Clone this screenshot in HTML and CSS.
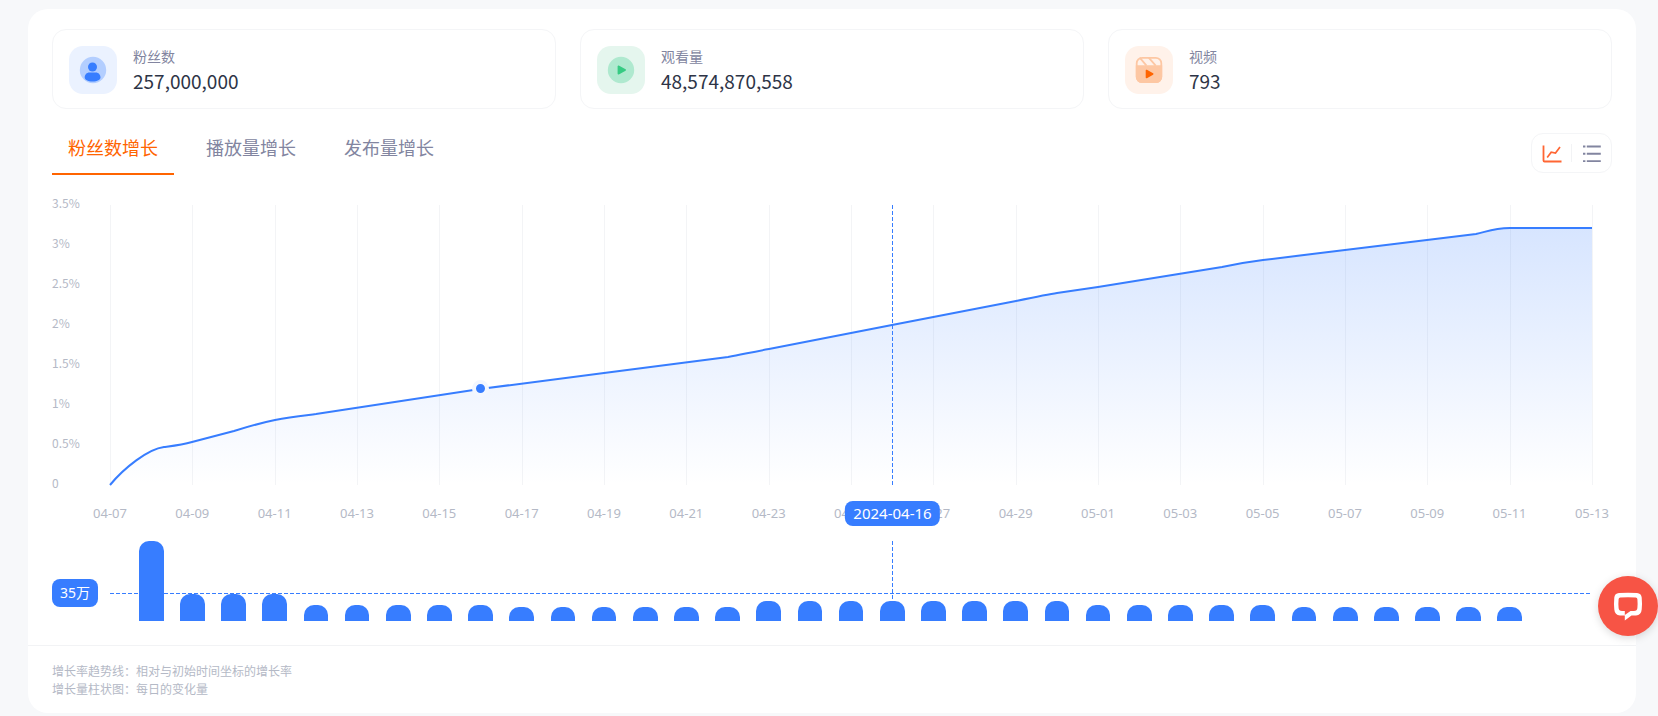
FILE: index.html
```
<!DOCTYPE html>
<html lang="zh-CN">
<head>
<meta charset="utf-8">
<meta name="viewport" content="width=device-width, initial-scale=1">
<title>粉丝数增长</title>
<link rel="stylesheet" href="styles.css">
</head>
<body>
<main class="panel">
  <section class="stats">
    <article class="stat">
      <span class="stat-icon blue">
        <svg width="28" height="28" viewBox="0 0 28 28"><circle cx="14" cy="14" r="13.2" fill="#b3ceff"/><circle cx="13.500" cy="11" r="4.500" fill="#377dff"/><path d="M5.700 21.500c0-2.800 2-5 4.600-5h6.600c2.600 0 4.600 2.200 4.600 5 0 2-3 4-7.900 4s-7.900-2-7.900-4z" fill="#377dff"/></svg>
      </span>
      <div><h2 class="stat-label">粉丝数</h2><p class="stat-value">257,000,000</p></div>
    </article>
    <article class="stat">
      <span class="stat-icon green">
        <svg width="28" height="28" viewBox="0 0 28 28"><circle cx="14" cy="14" r="13.2" fill="#afe9cf"/><path d="M11.400 10.300v7.400l6.800-3.700z" fill="#36cb83" stroke="#36cb83" stroke-width="1.600" stroke-linejoin="round"/></svg>
      </span>
      <div><h2 class="stat-label">观看量</h2><p class="stat-value">48,574,870,558</p></div>
    </article>
    <article class="stat">
      <span class="stat-icon orange">
        <svg width="28" height="28" viewBox="0 0 28 28"><path d="M.8 9.300h26.400V21a6 6 0 0 1-6 6H6.800a6 6 0 0 1-6-6z" fill="#fdc7a3"/><rect x="1.700" y="1.800" width="24.600" height="24.400" rx="5.500" fill="none" stroke="#fdc7a3" stroke-width="1.800"/><path d="M4.700 1.700l6.800 8M13.700 1.700l7 8" stroke="#fdc7a3" stroke-width="1.800"/><path d="M11.500 14.500v7l6.200-3.500z" fill="#ff6400" stroke="#ff6400" stroke-width="1.600" stroke-linejoin="round"/></svg>
      </span>
      <div><h2 class="stat-label">视频</h2><p class="stat-value">793</p></div>
    </article>
  </section>

  <div class="toolbar">
    <nav class="tabs">
      <button class="tab active" type="button">粉丝数增长</button>
      <button class="tab" type="button">播放量增长</button>
      <button class="tab" type="button">发布量增长</button>
    </nav>
    <div class="views">
      <button class="view" type="button" aria-label="图表">
        <svg width="20" height="20" viewBox="0 0 20 20" fill="none" stroke="#ff6633"><path d="M1.500 1.500V16.500q0 1 1 1H19.500" stroke-width="1.800"/><path d="M5.200 13.500l4-5.300 4.300.8L18 3" stroke-width="1.700"/></svg>
      </button>
      <button class="view" type="button" aria-label="列表">
        <svg width="20" height="20" viewBox="0 0 20 20" stroke="#8285a0" stroke-width="1.900"><path d="M1 2.500h2.400M4.800 2.500h14M1 9.800h2.400M4.800 9.800h14M1 17.100h2.400M4.800 17.100h14"/></svg>
      </button>
    </div>
  </div>

  <section class="chart">
    <ul class="y-axis"><li>3.5%</li><li>3%</li><li>2.5%</li><li>2%</li><li>1.5%</li><li>1%</li><li>0.5%</li><li>0</li></ul>
    <div class="plot">
      <div class="grid"><i></i><i></i><i></i><i></i><i></i><i></i><i></i><i></i><i></i><i></i><i></i><i></i><i></i><i></i><i></i><i></i><i></i><i></i></div>
      <svg class="curve" viewBox="0 0 1482 280" preserveAspectRatio="none">
        <defs><linearGradient id="fade" gradientUnits="userSpaceOnUse" x1="0" y1="23" x2="0" y2="280"><stop offset="0" stop-color="#377dff" stop-opacity=".2"/><stop offset="1" stop-color="#377dff" stop-opacity="0"/></linearGradient></defs>
        <path fill="url(#fade)" d="M0 280C14 263 38 244 54 242C62 241 72 240 82 237L124 226C140 221 150 218 165 215C180 212 190 211 206 209L370 184L494 168L618 152C634 149 642 147 659 144L782 120L906 96C930 91 940 89 947 88L988 82L1112 62C1130 58 1145 56 1153 55L1276 40L1366 29C1376 27 1383 23 1400 23H1482V280z"/>
        <path class="line" d="M0 280C14 263 38 244 54 242C62 241 72 240 82 237L124 226C140 221 150 218 165 215C180 212 190 211 206 209L370 184L494 168L618 152C634 149 642 147 659 144L782 120L906 96C930 91 940 89 947 88L988 82L1112 62C1130 58 1145 56 1153 55L1276 40L1366 29C1376 27 1383 23 1400 23H1482"/>
        <path class="dashed" d="M782.500 0V280"/>
      </svg>
      <span class="dot"></span>
    </div>
    <div class="x-axis">
      <ol class="dates"><li>04-07</li><li>04-09</li><li>04-11</li><li>04-13</li><li>04-15</li><li>04-17</li><li>04-19</li><li>04-21</li><li>04-23</li><li>04-25</li><li>04-27</li><li>04-29</li><li>05-01</li><li>05-03</li><li>05-05</li><li>05-07</li><li>05-09</li><li>05-11</li><li>05-13</li></ol>
      <span class="date-tip">2024-04-16</span>
    </div>
    <div class="bar-axis"><span class="value-tip">35万</span></div>
    <div class="bars-plot">
      <svg class="guides" viewBox="0 0 1482 80" preserveAspectRatio="none"><path class="dashed" d="M0 52.500H1481M782.500 0V80"/></svg>
      <div class="bars">
        <b style="height:100%"></b><b style="height:34%"></b><b style="height:34%"></b><b style="height:34%"></b>
        <b style="height:20%"></b><b style="height:20%"></b><b style="height:20%"></b><b style="height:20%"></b><b style="height:20%"></b>
        <b style="height:17%"></b><b style="height:17%"></b><b style="height:17%"></b><b style="height:17%"></b><b style="height:17%"></b><b style="height:17%"></b>
        <b style="height:25%"></b><b style="height:25%"></b><b style="height:25%"></b><b style="height:25%"></b><b style="height:25%"></b><b style="height:25%"></b><b style="height:25%"></b><b style="height:25%"></b>
        <b style="height:20%"></b><b style="height:20%"></b><b style="height:20%"></b><b style="height:20%"></b><b style="height:20%"></b>
        <b style="height:17%"></b><b style="height:17%"></b><b style="height:17%"></b><b style="height:17%"></b><b style="height:17%"></b><b style="height:17%"></b>
      </div>
    </div>
  </section>

  <footer class="notes">
    <p>增长率趋势线：相对与初始时间坐标的增长率</p>
    <p>增长量柱状图：每日的变化量</p>
  </footer>
</main>
<button class="chat" type="button" aria-label="在线客服">
  <svg width="32" height="32" viewBox="0 0 32 32" fill="#fff"><path fill-rule="evenodd" d="M7 3.100Q16 2.300 25 3.100 29.300 3.500 29.700 7.500 30.300 13.500 29.700 19.500 29.200 25.200 24 25.500H19.500L12.800 30.500V25.500H8Q2.800 25.200 2.300 19.500 1.700 13.500 2.300 7.500 2.700 3.500 7 3.100zM8.300 7.500Q16 6.900 23.700 7.500 25.300 7.700 25.400 9.300 25.800 13.500 25.400 18 25.200 21 22 21.100H18.500L12.800 25V21.100H10Q6.800 21 6.600 18 6.200 13.500 6.600 9.300 6.700 7.700 8.300 7.500z"/></svg>
</button>
</body>
</html>
```
FILE: styles.css
```
* { box-sizing: border-box; }
body {
  margin: 0;
  padding: 9px 22px 3px 28px;
  background: #f7f8fa;
  color: #2d3446;
  font-family: "Noto Sans", "Noto Sans CJK SC", sans-serif;
}
h2, p, ul, ol { margin: 0; padding: 0; font-weight: 400; list-style: none; }
button { padding: 0; border: 0; background: none; font: inherit; cursor: pointer; }
svg { display: block; }

.panel { background: #fff; border-radius: 20px; padding-top: 20px; }

.stats { display: grid; grid-template-columns: repeat(3, 1fr); gap: 24px; padding: 0 24px; }
.stat {
  display: flex;
  gap: 16px;
  padding: 16px 16px 14px;
  border: 1px solid #f4f5f7;
  border-radius: 14px;
}
.stat-icon { display: grid; place-items: center; width: 48px; height: 48px; border-radius: 14px; }
.blue { background: #ebf2ff; }
.green { background: #e5f6ee; }
.orange { background: #fff2ea; }
.stat-label { font-size: 14px; line-height: 22px; color: #8285a0; }
.stat-value { font-family: "Noto Sans CJK SC", sans-serif; font-size: 19px; line-height: 25px; }

.toolbar { display: flex; justify-content: space-between; align-items: flex-start; padding: 0 24px; margin-top: 24px; }
.tabs { display: flex; gap: 16px; }
.tab {
  padding: 0 16px 10px;
  border-bottom: 2px solid transparent;
  color: #8285a0;
  font-size: 18px;
  line-height: 30px;
}
.tab.active { color: #ff6400; border-color: #ff6400; }
.views { display: flex; align-items: center; height: 40px; border: 1px solid #f4f5f7; border-radius: 12px; }
.view { display: grid; place-items: center; width: 39px; height: 18px; }
.view + .view { width: 40px; border-left: 1px solid #f2f3f5; }

.chart {
  display: grid;
  grid-template-columns: 58px 1fr;
  margin-top: 30px;
  padding: 0 44px 24px 24px;
  color: #b4b9c6;
  font-size: 13px;
}
.y-axis { height: 280px; margin-top: -22px; font-family: "Noto Sans CJK SC", sans-serif; font-size: 12px; line-height: 40px; }
.plot { position: relative; height: 280px; }
.grid { position: absolute; inset: 0 -1px 0 0; display: flex; border-right: 1px solid #f3f4f6; }
.grid i { flex: 1; border-left: 1px solid #f3f4f6; }
.curve, .guides { position: absolute; inset: 0; width: 100%; height: 100%; overflow: visible; }
.line { fill: none; stroke: #377dff; stroke-width: 2; vector-effect: non-scaling-stroke; }
.dashed { fill: none; stroke: #377dff; stroke-width: 1; stroke-dasharray: 4 2; vector-effect: non-scaling-stroke; }
.dot {
  position: absolute;
  left: 25%;
  top: 184px;
  width: 17px;
  height: 17px;
  margin: -9px;
  border: 4px solid #f3f7ff;
  border-radius: 50%;
  background: #377dff;
}
.x-axis { position: relative; grid-column: 2; margin-top: 16px; line-height: 25px; }
.dates { display: flex; justify-content: space-between; }
.dates li { display: flex; justify-content: center; width: 0; white-space: nowrap; }
.date-tip {
  position: absolute;
  top: 0;
  left: 52.8%;
  transform: translateX(-50%);
  padding: 0 8px;
  border-radius: 8px;
  background: #377dff;
  color: #fff;
  font-size: 15px;
}
.bar-axis { margin-top: 15px; padding-top: 38px; }
.value-tip {
  display: inline-block;
  padding: 0 8px;
  border-radius: 8px;
  background: #377dff;
  color: #fff;
  font-size: 14px;
  line-height: 28px;
}
.bars-plot { position: relative; height: 80px; margin-top: 15px; }
.bars { position: relative; display: flex; align-items: flex-end; height: 100%; }
.bars::before { content: ""; flex: 5; }
.bars::after { content: ""; flex: 15; }
.bars b { position: relative; flex: 10; }
.bars b::before {
  content: "";
  position: absolute;
  inset: 0 20%;
  border-radius: 10px 10px 0 0;
  background: #377dff;
}

.notes { padding: 17px 24px 14px; border-top: 1px solid #f2f3f5; color: #b4b9c6; font-size: 12px; line-height: 18px; }

.chat {
  position: fixed;
  right: 0;
  bottom: 80px;
  display: grid;
  place-items: center;
  width: 60px;
  height: 60px;
  border-radius: 50%;
  background: #f75445;
  box-shadow: 0 2px 8px rgba(0, 0, 0, .15);
}
```
